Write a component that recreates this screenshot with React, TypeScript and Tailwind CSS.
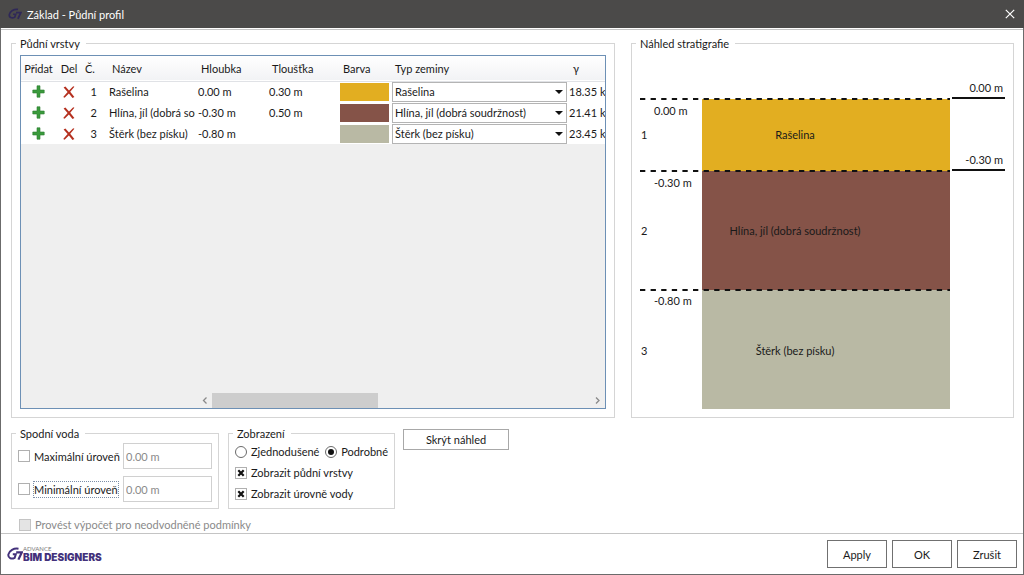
import React, { useState } from "react";

type Layer = {
  id: number;
  name: string;
  depth: string;
  thickness: string;
  swatch: string;
  weight: string;
};

const layers: Layer[] = [
  { id: 1, name: "Rašelina", depth: "0.00 m", thickness: "0.30 m", swatch: "bg-[#e2ae21]", weight: "18.35 kN/m³" },
  { id: 2, name: "Hlína, jíl (dobrá soudržnost)", depth: "-0.30 m", thickness: "0.50 m", swatch: "bg-[#855348]", weight: "21.41 kN/m³" },
  { id: 3, name: "Štěrk (bez písku)", depth: "-0.80 m", thickness: "", swatch: "bg-[#b9b9a4]", weight: "23.45 kN/m³" },
];

const soilTypes = layers.map((l) => l.name);

function Mark({ className }: { className: string }) {
  return (
    <svg viewBox="0 0 16 14" className={className} fill="none" aria-hidden="true">
      <path d="M11.500 1.700C6.800.9 2.200 3.500 1.400 7.400c-.6 3.700 3 5.100 6.300 3.400L8.800 7.300H5.800" stroke="currentColor" strokeWidth="2" />
      <path d="M9.200 5.400h5.600l-3.400 7.200" stroke="currentColor" strokeWidth="2.200" />
    </svg>
  );
}

function Group({ title, className, children }: { title: string; className: string; children: React.ReactNode }) {
  return (
    <fieldset className={`min-w-0 border border-[#d5d5d5] ${className}`}>
      <legend className="ml-1 h-[15px] pr-[6px] pl-1 leading-[15px]">{title}</legend>
      {children}
    </fieldset>
  );
}

function Check({
  label,
  defaultChecked,
  disabled,
  focused,
}: {
  label: string;
  defaultChecked?: boolean;
  disabled?: boolean;
  focused?: boolean;
}) {
  return (
    <label className={`flex items-center gap-1 whitespace-nowrap ${disabled ? "text-[#8a8a8a]" : ""}`}>
      <span className="relative flex size-3 shrink-0">
        <input
          type="checkbox"
          defaultChecked={defaultChecked}
          disabled={disabled}
          className="peer size-3 appearance-none border border-[#b0b0b0] bg-white disabled:border-[#c4c4c4] disabled:bg-[#e4e4e4]"
        />
        <svg viewBox="0 0 12 12" className="pointer-events-none absolute inset-0 hidden size-3 peer-checked:block" aria-hidden="true">
          <path d="M3.300 3.300l5.400 5.400M8.700 3.300L3.300 8.700" stroke="#111" strokeWidth="2.200" />
        </svg>
      </span>
      <span className={focused ? "outline-1 outline-dotted outline-[#7d8fa8]" : ""}>{label}</span>
    </label>
  );
}

function Radio({ label, defaultChecked }: { label: string; defaultChecked?: boolean }) {
  return (
    <label className="flex items-center gap-1 whitespace-nowrap">
      <span className="relative flex size-3 shrink-0">
        <input type="radio" name="view" defaultChecked={defaultChecked} className="peer size-3 appearance-none rounded-full border border-[#6a6a6a] bg-white" />
        <span className="pointer-events-none absolute inset-[3px] hidden rounded-full bg-[#111] peer-checked:block" />
      </span>
      {label}
    </label>
  );
}

function LayerRow({ layer }: { layer: Layer }) {
  return (
    <tr className="h-[21px] bg-white">
      <td>
        <button type="button" aria-label="Přidat" className="mx-auto block">
          <svg viewBox="0 0 13 13" className="block size-[13px]" aria-hidden="true">
            <path d="M5 .8h3V5h4.200v3H8v4.200H5V8H.8V5H5z" fill="#3a9a3c" stroke="#2b7d31" strokeWidth=".6" />
          </svg>
        </button>
      </td>
      <td>
        <button type="button" aria-label="Del" className="mx-auto block">
          <svg viewBox="0 0 12 12" className="block size-3" aria-hidden="true">
            <path d="M.6 1.600 2.400.4 6 4.500 10.200.3l1.200.4-4.200 5.100L11.400 11l-1.900 1-3.600-4.500-4.300 4.200-1.400-.8 4.400-5z" fill="#b5301f" />
          </svg>
        </button>
      </td>
      <td className="pr-[7px] text-right">{layer.id}</td>
      <td className="pr-[2px] pl-[5px]">
        <div className="overflow-hidden whitespace-nowrap">{layer.name}</div>
      </td>
      <td className="pl-px">{layer.depth}</td>
      <td className="pl-px">{layer.thickness}</td>
      <td className="pr-[2px] pl-px">
        <div className={`h-[18px] ${layer.swatch}`} />
      </td>
      <td className="px-px">
        <div className="relative">
          <select
            aria-label="Typ zeminy"
            defaultValue={layer.name}
            className="block h-5 w-full appearance-none rounded-none border border-[#b4b4b4] bg-white pl-[2px]"
          >
            {soilTypes.map((s) => (
              <option key={s}>{s}</option>
            ))}
          </select>
          <svg viewBox="0 0 8 4" className="pointer-events-none absolute top-2 right-1 h-1 w-2" aria-hidden="true">
            <path d="M0 0h8L4 4z" fill="#111" />
          </svg>
        </div>
      </td>
      <td className="overflow-hidden pl-px whitespace-nowrap">{layer.weight}</td>
    </tr>
  );
}

function Profile() {
  return (
    <svg viewBox="0 0 381 366" className="block h-[366px] w-full" role="img" aria-label="Náhled stratigrafie" fontSize="11" fill="#1a1a1a">
      <rect x="70" y="48" width="248" height="72" fill="#e2ae21" />
      <rect x="70" y="120" width="248" height="119" fill="#855348" />
      <rect x="70" y="239" width="248" height="119" fill="#b9b9a4" />
      <g stroke="#111" strokeWidth="2">
        <path d="M8 48h310M8 120h310M8 239h310" strokeDasharray="5.300 5.300" />
        <path d="M320 47h53M320 119h53" />
      </g>
      <text x="22" y="64">0.00 m</text>
      <text x="22" y="136">-0.30 m</text>
      <text x="22" y="254">-0.80 m</text>
      <text x="9" y="88">1</text>
      <text x="9" y="184">2</text>
      <text x="9" y="304">3</text>
      <g textAnchor="middle">
        <text x="163" y="88">Rašelina</text>
        <text x="163" y="184">Hlína, jíl (dobrá soudržnost)</text>
        <text x="163" y="304">Štěrk (bez písku)</text>
      </g>
      <g textAnchor="end">
        <text x="371" y="41">0.00 m</text>
        <text x="371" y="113">-0.30 m</text>
      </g>
    </svg>
  );
}

export default function App() {
  const [preview, setPreview] = useState(true);
  const action = "h-[28px] w-[60px] border border-[#707070] bg-white";
  return (
    <div className="flex min-h-screen flex-col bg-white font-['Lato','Open_Sans',sans-serif] text-[11px] leading-[15px] text-[#1a1a1a]">
      <header className="flex h-7 items-center gap-[5px] bg-[#4b4a49] pr-2 pl-2 text-white">
        <Mark className="h-[12px] w-[14px] text-[#2f2858]" />
        <h1 className="flex-1">Základ - Půdní profil</h1>
        <button type="button" aria-label="Zavřít" className="p-px">
          <svg viewBox="0 0 10 10" className="block size-[10px]" aria-hidden="true">
            <path d="M.8.8l8.400 8.400M9.200.8L.8 9.200" stroke="#fff" strokeWidth="1.200" />
          </svg>
        </button>
      </header>

      <div className="flex flex-1 flex-col border-x border-b border-[#6b6b6b] pt-px">
        <main className="flex flex-1 flex-col border-t border-[#c4c4c4] pt-[6px] pr-[9px] pl-[10px]">
          <div className="flex flex-1 gap-4">
            <Group title="Půdní vrstvy" className="flex flex-1 flex-col">
              <div className="mx-2 mt-1 mb-2 flex flex-1 flex-col overflow-hidden border border-[#6d90b5] bg-[#efefef]">
                <table className="w-full table-fixed border-collapse">
                  <colgroup>
                    <col className="w-[35px]" />
                    <col className="w-[26px]" />
                    <col className="w-[22px]" />
                    <col className="w-[93px]" />
                    <col className="w-[71px]" />
                    <col className="w-[71px]" />
                    <col className="w-[52px]" />
                    <col className="w-[177px]" />
                    <col />
                  </colgroup>
                  <thead>
                    <tr className="h-[25px] border-b border-[#e0e2e6] bg-linear-to-b from-white to-[#f2f3f5] text-left">
                      <th className="text-center font-normal">Přidat</th>
                      <th className="text-center font-normal">Del</th>
                      <th className="pl-[3px] font-normal">Č.</th>
                      <th className="pl-2 font-normal">Název</th>
                      <th className="pl-1 font-normal">Hloubka</th>
                      <th className="pl-1 font-normal">Tloušťka</th>
                      <th className="pl-1 font-normal">Barva</th>
                      <th className="pl-1 font-normal">Typ zeminy</th>
                      <th className="pl-[5px] font-normal">γ</th>
                    </tr>
                  </thead>
                  <tbody>
                    {layers.map((l) => (
                      <LayerRow key={l.id} layer={l} />
                    ))}
                  </tbody>
                </table>
                <div className="mt-auto ml-[178px] flex h-[15px] items-center text-[#8a8a8a]">
                  <svg viewBox="0 0 13 15" className="h-[15px] w-[13px]" fill="none" stroke="currentColor" strokeWidth="1.300" aria-hidden="true">
                    <path d="M7.500 4.500l-3 3 3 3" />
                  </svg>
                  <div className="flex h-full flex-1">
                    <div className="h-full w-[44%] bg-[#cdcdcd]" />
                  </div>
                  <svg viewBox="0 0 15 15" className="size-[15px]" fill="none" stroke="currentColor" strokeWidth="1.300" aria-hidden="true">
                    <path d="M6 4.500l3 3-3 3" />
                  </svg>
                </div>
              </div>
            </Group>
            {preview && (
              <Group title="Náhled stratigrafie" className="w-[383px]">
                <Profile />
              </Group>
            )}
          </div>

          <div className="mt-2 flex items-start">
            <Group title="Spodní voda" className="w-[208px]">
              <div className="flex flex-col gap-[7px] px-[6px] pt-[2px] pb-[6px]">
                {["Maximální úroveň", "Minimální úroveň"].map((label, i) => (
                  <div key={label} className="flex items-center justify-between">
                    <Check label={label} focused={i === 1} />
                    <input
                      type="text"
                      aria-label={label}
                      defaultValue="0.00 m"
                      disabled
                      className="h-[26px] w-[89px] border border-[#d0d0d0] bg-white px-[2px] text-[#8a8a8a]"
                    />
                  </div>
                ))}
              </div>
            </Group>
            <Group title="Zobrazení" className="ml-[9px] w-[167px]">
              <div className="px-[6px] pb-1">
                <div className="flex h-[21px] items-center justify-between">
                  <Radio label="Zjednodušené" />
                  <Radio label="Podrobné" defaultChecked />
                </div>
                <div className="flex h-[21px] items-center">
                  <Check label="Zobrazit půdní vrstvy" defaultChecked />
                </div>
                <div className="flex h-[21px] items-center">
                  <Check label="Zobrazit úrovně vody" defaultChecked />
                </div>
              </div>
            </Group>
            <button
              type="button"
              onClick={() => setPreview(!preview)}
              className="mt-[3px] ml-2 h-[21px] w-[106px] border border-[#a8a8a8] bg-white"
            >
              Skrýt náhled
            </button>
          </div>

          <div className="mt-2 mb-px pl-2">
            <Check label="Provést výpočet pro neodvodněné podmínky" disabled />
          </div>
        </main>

        <footer className="flex h-[41px] items-center justify-between border-t border-[#c4c4c4] pr-[6px] pl-[6px]">
          <div className="flex items-center">
            <Mark className="h-[14px] w-4 text-[#43317b]" />
            <div className="flex flex-col">
              <span className="text-[6px] leading-[6px] text-[#777]">ADVANCE</span>
              <span className="font-['Inter',sans-serif] text-[10px] leading-[10px] font-black text-[#43317b]">BIM DESIGNERS</span>
            </div>
          </div>
          <div className="flex gap-[5px]">
            <button type="button" className={action}>Apply</button>
            <button type="button" className={action}>OK</button>
            <button type="button" className={action}>Zrušit</button>
          </div>
        </footer>
      </div>
    </div>
  );
}
